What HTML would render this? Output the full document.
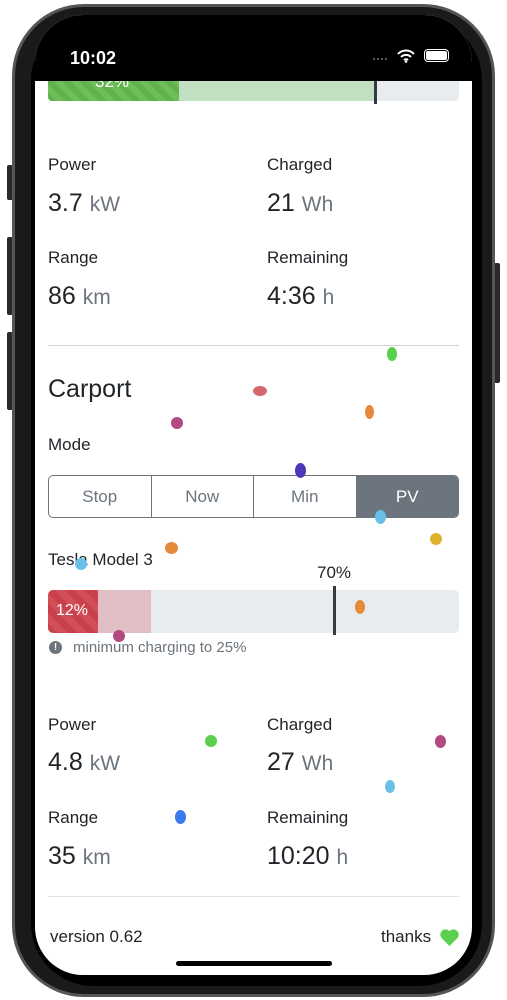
<!DOCTYPE html>
<html><head><meta charset="utf-8"><style>
*{margin:0;padding:0;box-sizing:border-box}
body{width:507px;height:1000px;background:#fff;position:relative;overflow:hidden;font-family:"Liberation Sans",sans-serif;color:#212529}
.phone{position:absolute;left:12px;top:4px;width:483px;height:993px;border-radius:72px;background:#1a1a1a;border:3px solid #555}
.inner{position:absolute;left:16px;top:11px;width:451px;height:968px;border-radius:62px;background:#000}
.screen{position:absolute;left:35px;top:15px;width:437px;height:960px;border-radius:48px;background:#fff;overflow:hidden}
.status{position:absolute;left:0;top:0;width:437px;height:66px;background:#000;color:#fff}
.btn{position:absolute;background:#2a2a2a;border-radius:2px}
.a{position:absolute}
.lbl{position:absolute;font-size:17px;color:#212529}
.val{position:absolute;font-size:25px;color:#212529}
.val span{color:#6c757d;font-size:21px}
.conf{position:absolute;border-radius:50%}
</style></head><body>
<div class="btn" style="left:7px;top:165px;width:6px;height:35px"></div>
<div class="btn" style="left:7px;top:237px;width:6px;height:78px"></div>
<div class="btn" style="left:7px;top:332px;width:6px;height:78px"></div>
<div class="btn" style="left:494px;top:263px;width:6px;height:120px"></div>
<div class="phone"><div class="inner"></div></div>
<div class="screen">
 <div class="a" style="left:13px;top:60px;width:411px;height:26px;background:#e9ecef;border-radius:4px;overflow:hidden">
  <div class="a" style="left:0;top:0;width:131px;height:26px;background:repeating-linear-gradient(45deg,#5fb34b 0 6px,#6fbe5a 6px 12px)"></div>
  <div class="a" style="left:131px;top:0;width:195px;height:26px;background:#c3dfc2"></div>
  <div class="a" style="left:47px;top:-3px;color:#fff;font-size:17px">32%</div>
 </div>
 <div class="a" style="left:339px;top:60px;width:3px;height:29px;background:#343a40"></div>
 <div class="status">
  <div class="a" style="left:35px;top:33px;font-size:18px;font-weight:bold">10:02</div>
  <div class="a" style="left:338px;top:43px;width:14px;height:2px;border-top:2px dotted #555"></div>
  <svg class="a" style="left:362px;top:34px" width="18" height="14" viewBox="0 0 18 14"><path d="M1 5a11 11 0 0 1 16 0M4 8a7 7 0 0 1 10 0M7 11a3 3 0 0 1 4 0" stroke="#fff" stroke-width="2" fill="none"/><circle cx="9" cy="12.5" r="1.3" fill="#fff"/></svg>
  <div class="a" style="left:389px;top:34px;width:25px;height:13px;border:1.5px solid #fff;border-radius:4px;padding:1px"><div style="background:#fff;width:100%;height:100%;border-radius:2px"></div></div>
 </div>
 <div class="lbl" style="left:13px;top:140px">Power</div><div class="lbl" style="left:232px;top:140px">Charged</div>
 <div class="val" style="left:13px;top:174px">3.7 <span>kW</span></div><div class="val" style="left:232px;top:174px">21 <span>Wh</span></div>
 <div class="lbl" style="left:13px;top:233px">Range</div><div class="lbl" style="left:232px;top:233px">Remaining</div>
 <div class="val" style="left:13px;top:267px">86 <span>km</span></div><div class="val" style="left:232px;top:267px">4:36 <span>h</span></div>
 <div class="a" style="left:13px;top:330px;width:411px;height:1px;background:#ced4da"></div>
 <div class="a" style="left:13px;top:360px;font-size:25px">Carport</div>
 <div class="lbl" style="left:13px;top:420px">Mode</div>
 <div class="a" style="left:13px;top:460px;width:411px;height:43px;border:1px solid #6c757d;border-radius:5px;overflow:hidden;display:flex;font-size:17px;color:#6c757d">
  <div style="flex:1;text-align:center;line-height:41px;border-right:1px solid #6c757d">Stop</div>
  <div style="flex:1;text-align:center;line-height:41px;border-right:1px solid #6c757d">Now</div>
  <div style="flex:1;text-align:center;line-height:41px;border-right:1px solid #6c757d">Min</div>
  <div style="flex:1;text-align:center;line-height:41px;background:#6c757d;color:#fff">PV</div>
 </div>
 <div class="lbl" style="left:13px;top:535px">Tesla Model 3</div>
 <div class="a" style="left:282px;top:548px;font-size:17px">70%</div>
 <div class="a" style="left:13px;top:575px;width:411px;height:43px;background:#e9ecef;border-radius:5px;overflow:hidden">
  <div class="a" style="left:0;top:0;width:50px;height:43px;background:repeating-linear-gradient(45deg,#c9404a 0 7px,#d24f58 7px 14px)"></div>
  <div class="a" style="left:50px;top:0;width:53px;height:43px;background:#e1bec3"></div>
  <div class="a" style="left:8px;top:12px;color:#fff;font-size:16px">12%</div>
 </div>
 <div class="a" style="left:298px;top:571px;width:3px;height:49px;background:#343a40"></div>
 <div class="a" style="left:14px;top:626px;width:13px;height:13px;border-radius:50%;background:#6c757d;color:#fff;font-size:10px;font-weight:bold;text-align:center;line-height:13px">!</div>
 <div class="a" style="left:38px;top:624px;font-size:15px;color:#6c757d">minimum charging to 25%</div>
 <div class="lbl" style="left:13px;top:700px">Power</div><div class="lbl" style="left:232px;top:700px">Charged</div>
 <div class="val" style="left:13px;top:733px">4.8 <span>kW</span></div><div class="val" style="left:232px;top:733px">27 <span>Wh</span></div>
 <div class="lbl" style="left:13px;top:793px">Range</div><div class="lbl" style="left:232px;top:793px">Remaining</div>
 <div class="val" style="left:13px;top:827px">35 <span>km</span></div><div class="val" style="left:232px;top:827px">10:20 <span>h</span></div>
 <div class="a" style="left:13px;top:881px;width:411px;height:1px;background:#dee2e6"></div>
 <div class="a" style="left:15px;top:912px;font-size:17px">version 0.62</div>
 <div class="a" style="left:346px;top:912px;font-size:17px">thanks</div>
 <svg class="a" style="left:405px;top:914px" width="19" height="17" viewBox="0 0 19 17"><path d="M9.5 17L1.5 9A4.8 4.8 0 0 1 9.5 2.2A4.8 4.8 0 0 1 17.5 9Z" fill="#5ad04e"/></svg>
 <div class="a" style="left:141px;top:946px;width:156px;height:5px;border-radius:3px;background:#000"></div>
 <div class="conf" style="left:352px;top:332px;width:10px;height:14px;background:#5ad04e"></div>
 <div class="conf" style="left:218px;top:371px;width:14px;height:10px;background:#c9404a;opacity:.8"></div>
 <div class="conf" style="left:136px;top:402px;width:12px;height:12px;background:#b04a80"></div>
 <div class="conf" style="left:330px;top:390px;width:9px;height:14px;background:#e68a3a"></div>
 <div class="conf" style="left:260px;top:448px;width:11px;height:15px;background:#4b3ab8"></div>
 <div class="conf" style="left:340px;top:495px;width:11px;height:14px;background:#68c0e8"></div>
 <div class="conf" style="left:130px;top:527px;width:13px;height:12px;background:#e68a3a"></div>
 <div class="conf" style="left:40px;top:543px;width:12px;height:12px;background:#68c0e8"></div>
 <div class="conf" style="left:78px;top:615px;width:12px;height:12px;background:#b04a80"></div>
 <div class="conf" style="left:170px;top:720px;width:12px;height:12px;background:#5ad04e"></div>
 <div class="conf" style="left:140px;top:795px;width:11px;height:14px;background:#3a7af0"></div>
 <div class="conf" style="left:400px;top:720px;width:11px;height:13px;background:#b04a80"></div>
 <div class="conf" style="left:350px;top:765px;width:10px;height:13px;background:#68c0e8"></div>
 <div class="conf" style="left:395px;top:518px;width:12px;height:12px;background:#e0b030"></div>
 <div class="conf" style="left:320px;top:585px;width:10px;height:14px;background:#e68a3a"></div>
</div>
</body></html>
